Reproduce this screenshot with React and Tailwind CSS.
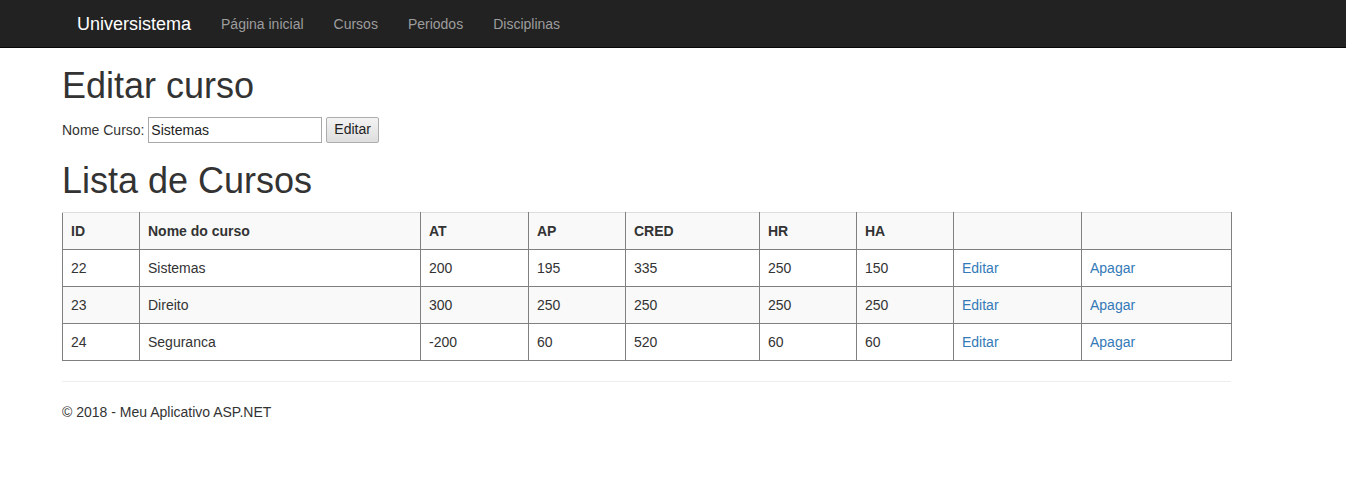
import { useState } from "react";

const cursos = [
  { id: 22, nome: "Sistemas", at: 200, ap: 195, cred: 335, hr: 250, ha: 150 },
  { id: 23, nome: "Direito", at: 300, ap: 250, cred: 250, hr: 250, ha: 250 },
  { id: 24, nome: "Seguranca", at: -200, ap: 60, cred: 520, hr: 60, ha: 60 },
];

const widths = ["w-[77px]", "w-[281px]", "w-[108px]", "w-[97px]", "w-[134px]", "w-[97px]", "w-[97px]", "w-[128px]", "w-[150px]"];

function App() {
  const [nome, setNome] = useState("Sistemas");

  const cell = "border border-[#808080] px-2 py-2 leading-[20px] text-left align-top";

  return (
    <div className="min-h-screen bg-white text-[14px] text-[#333] font-['Liberation_Sans',Arial,sans-serif]">
      {/* Navbar */}
      <nav className="h-[48px] bg-[#222] border-b border-[#080808]">
        <div className="ml-[62px] w-[1170px] h-[47px] flex items-center">
          <a href="#" className="px-[15px] text-[18px] leading-[20px] text-white">Universistema</a>
          <a href="#" className="px-[15px] leading-[20px] text-[#9d9d9d]">Página inicial</a>
          <a href="#" className="px-[15px] leading-[20px] text-[#9d9d9d]">Cursos</a>
          <a href="#" className="px-[15px] leading-[20px] text-[#9d9d9d]">Periodos</a>
          <a href="#" className="px-[15px] leading-[20px] text-[#9d9d9d]">Disciplinas</a>
        </div>
      </nav>

      <div className="ml-[62px] w-[1170px]">
        <h2 className="mt-[18px] mb-[11px] text-[36px] leading-[1.1] font-normal">Editar curso</h2>

        <form className="flex items-center h-[26px]" onSubmit={(e) => e.preventDefault()}>
          <label className="leading-[20px]">Nome Curso:&nbsp;</label>
          <input
            value={nome}
            onChange={(e) => setNome(e.target.value)}
            className="w-[174px] h-[26px] px-[2px] border border-[#a9a9a9] text-[14px] text-[#222] outline-none"
          />
          <button className="ml-[4px] h-[26px] px-[7px] border border-[#adadad] rounded-[2px] bg-gradient-to-b from-[#f3f3f3] to-[#dedede] text-[#222]">
            Editar
          </button>
        </form>

        <h2 className="mt-[18px] mb-[12px] text-[36px] leading-[1.1] font-normal">Lista de Cursos</h2>

        <table className="w-[1169px] table-fixed border-collapse">
          <thead>
            <tr className="bg-[#f9f9f9]">
              {["ID", "Nome do curso", "AT", "AP", "CRED", "HR", "HA", "", ""].map((h, i) => (
                <th key={i} className={`${cell} ${widths[i]} border-t-[#ddd] font-bold`}>{h}</th>
              ))}
            </tr>
          </thead>
          <tbody>
            {cursos.map((c, i) => (
              <tr key={c.id} className={i % 2 === 1 ? "bg-[#f9f9f9]" : "bg-white"}>
                <td className={cell}>{c.id}</td>
                <td className={cell}>{c.nome}</td>
                <td className={cell}>{c.at}</td>
                <td className={cell}>{c.ap}</td>
                <td className={cell}>{c.cred}</td>
                <td className={cell}>{c.hr}</td>
                <td className={cell}>{c.ha}</td>
                <td className={cell}><a href="#" className="text-[#337ab7]">Editar</a></td>
                <td className={cell}><a href="#" className="text-[#337ab7]">Apagar</a></td>
              </tr>
            ))}
          </tbody>
        </table>

        <hr className="mt-[20px] w-[1169px] border-0 border-t border-[#eee]" />
        <footer className="mt-[20px] leading-[20px]">
          <p>© 2018 - Meu Aplicativo ASP.NET</p>
        </footer>
      </div>
    </div>
  );
}

export default App;
